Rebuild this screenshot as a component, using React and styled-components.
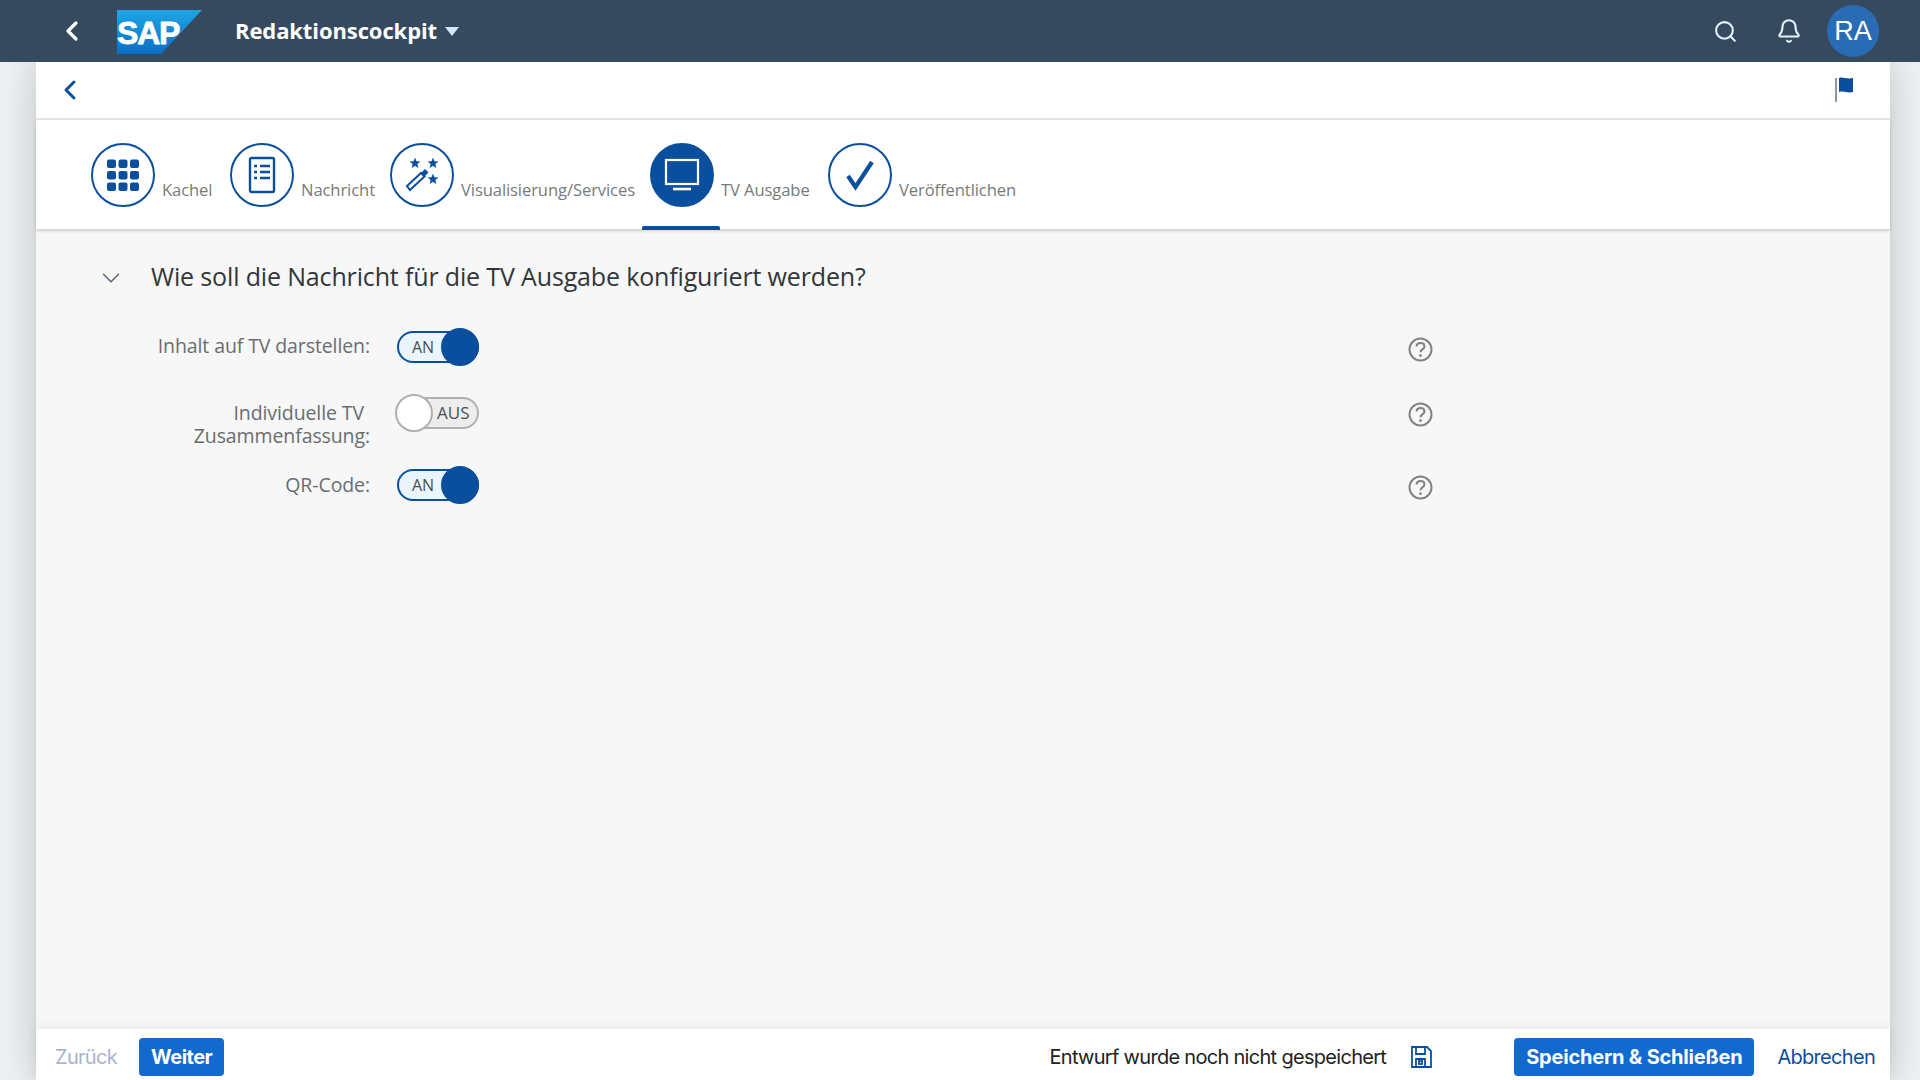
import React from 'react';
import styled, { createGlobalStyle } from 'styled-components';
import { Search, Bell, ChevronLeft, ChevronDown } from 'lucide-react';

const Global = createGlobalStyle`
  html, body { margin: 0; padding: 0; height: 100%; }
  body {
    background: #eef1f2;
    font-family: "Open Sans", "Liberation Sans", sans-serif;
    overflow: hidden;
  }
`;

const Page = styled.div`
  display: flex;
  flex-direction: column;
  height: 1080px;
`;

const Shell = styled.header`
  display: flex;
  align-items: center;
  height: 62px;
  flex: none;
  background: #354a5f;
  color: #fff;
  position: relative;
  z-index: 2;
`;

const ShellBack = styled.button`
  display: flex;
  border: 0;
  padding: 0;
  background: none;
  color: #fff;
  margin-left: 56px;
`;

const Logo = styled.svg`
  width: 86px;
  height: 44px;
  margin-left: 29px;
  margin-top: 1px;
  flex: none;
`;

const AppTitle = styled.div`
  margin-left: 32px;
  margin-top: -3px;
  font-family: "Open Sans", sans-serif;
  font-weight: 700;
  font-size: 22px;
  letter-spacing: -0.1px;
`;

const Caret = styled.span`
  margin-left: 8px;
  border-left: 7.5px solid transparent;
  border-right: 7.5px solid transparent;
  border-top: 9px solid #d1e8ff;
`;

const ShellRight = styled.div`
  margin-left: auto;
  display: flex;
  align-items: center;
  padding-right: 41px;
`;

const ShellIcon = styled.span`
  display: flex;
  margin-right: ${p => p.$gap}px;
  color: #e4f0fa;
`;

const Avatar = styled.div`
  width: 52px;
  height: 52px;
  border-radius: 50%;
  background: #2a6bb5;
  display: flex;
  align-items: center;
  justify-content: center;
  font-family: "Liberation Sans", sans-serif;
  font-size: 27px;
`;

const Sheet = styled.div`
  flex: 1;
  min-height: 0;
  display: flex;
  flex-direction: column;
  margin: 0 30px 0 36px;
  background: #f7f7f7;
  box-shadow: 0 0 36px rgba(0, 0, 0, 0.2);
`;

const SubBar = styled.div`
  display: flex;
  align-items: center;
  justify-content: space-between;
  height: 58px;
  flex: none;
  box-sizing: border-box;
  padding: 0 35px 0 18px;
  background: #fff;
  border-bottom: 2px solid #e4e4e4;
  color: #0a4f9e;
`;

const Tabs = styled.nav`
  display: flex;
  height: 109px;
  flex: none;
  box-sizing: border-box;
  padding: 23px 0 0 55px;
  background: #fff;
  box-shadow: 0 2px 3px rgba(0, 0, 0, 0.16);
  position: relative;
`;

const Tab = styled.div`
  display: flex;
  gap: 7px;
  position: relative;
  height: 64px;
  width: ${p => p.$width}px;
  flex: none;
`;

const Circle = styled.div`
  width: 64px;
  height: 64px;
  flex: none;
  box-sizing: border-box;
  border-radius: 50%;
  border: 2px solid #0a4f9e;
  background: ${p => (p.$active ? '#0a4f9e' : '#fff')};
  display: flex;
  align-items: center;
  justify-content: center;
  color: #0a4f9e;
`;

const TabLabel = styled.span`
  font-family: "Open Sans", sans-serif;
  font-size: 16.6px;
  line-height: 20px;
  letter-spacing: -0.1px;
  color: #7a7a7a;
  margin-top: 37px;
  white-space: nowrap;
`;

const Underline = styled.span`
  position: absolute;
  left: -8px;
  top: 83px;
  width: 78px;
  height: 4px;
  border-radius: 2px 2px 0 0;
  background: #0a4f9e;
`;

const Main = styled.main`
  flex: 1;
  min-height: 0;
  padding: 29px 0 0 60px;
`;

const SectionHead = styled.div`
  display: flex;
  align-items: center;
  gap: 25px;
  color: #5a6b7a;
`;

const SectionToggle = styled.span`
  display: flex;
  margin-top: 4px;
`;

const SectionTitle = styled.h2`
  margin: 0;
  font-family: "Open Sans", sans-serif;
  font-weight: 400;
  font-size: 25px;
  line-height: 36px;
  letter-spacing: -0.15px;
  color: #32363a;
`;

const Form = styled.div`
  display: grid;
  grid-template-columns: 274px 84px 1fr;
  grid-template-rows: 66px 72px 40px;
  column-gap: 27px;
  margin-top: 21px;
`;

const Label = styled.div`
  text-align: right;
  font-family: "Open Sans", sans-serif;
  font-size: 19.5px;
  line-height: 23px;
  color: #6a6d70;
  padding-top: ${p => p.$top}px;
  box-sizing: border-box;
  letter-spacing: -0.1px;
`;

const Indent = styled.span`
  padding-right: 6px;
`;

const ToggleCell = styled.div`
  padding-top: 16px;
`;

const Toggle = styled.div`
  position: relative;
  width: 82px;
  height: 32px;
  box-sizing: border-box;
  border-radius: 16px;
  border: 2px solid ${p => (p.$on ? '#0a4f9e' : '#aeb0b2')};
  background: ${p => (p.$on ? '#ebf5fe' : '#ededed')};
  font-family: "Open Sans", sans-serif;
  font-size: ${p => (p.$on ? 16 : 17)}px;
  line-height: 28px;
  color: #4d4f52;
  padding-left: ${p => (p.$on ? 13 : 38)}px;
`;

const Knob = styled.span`
  position: absolute;
  top: -5px;
  ${p => (p.$on ? 'right: -2px;' : 'left: -4px;')}
  width: 38px;
  height: 38px;
  box-sizing: border-box;
  border-radius: 50%;
  background: ${p => (p.$on ? '#0a4f9e' : '#fff')};
  border: 2px solid ${p => (p.$on ? '#0a4f9e' : '#aeb0b2')};
`;

const HelpCell = styled.div`
  padding-left: 900px;
  padding-top: ${p => p.$top}px;
  color: #818487;
`;

const Footer = styled.footer`
  display: flex;
  align-items: center;
  box-sizing: border-box;
  height: 51px;
  flex: none;
  background: #fff;
  box-shadow: 0 -2px 10px rgba(0, 0, 0, 0.06);
  padding: 5px 15px 0 19px;
  font-family: Inter, "Liberation Sans", sans-serif;
  font-size: 20px;
`;

const Ghost = styled.span`
  color: ${p => p.$color};
  margin-right: ${p => p.$gap}px;
  letter-spacing: -0.7px;
`;

const Primary = styled.button`
  height: 38px;
  box-sizing: border-box;
  border: 0;
  border-radius: 4px;
  padding: 0 12px;
  background: #1269ce;
  color: #fff;
  font-family: Inter, "Liberation Sans", sans-serif;
  font-weight: 700;
  font-size: 20px;
  letter-spacing: ${p => p.$spacing}px;
  margin-right: ${p => p.$gap}px;
`;

const Draft = styled.span`
  margin-left: auto;
  color: #222;
  letter-spacing: -0.7px;
`;

const SaveIcon = styled.svg`
  margin: 0 82px 0 24px;
`;

const GridIcon = () => (
  <svg width="34" height="34" viewBox="0 0 34 34" fill="#0a4f9e">
    {[0, 11.5, 23].map(y => [0, 11.5, 23].map(x => (
      <rect key={`${x}-${y}`} x={x + 1} y={y + 1.5} width="9" height="8.5" rx="2" />
    )))}
  </svg>
);

const DocIcon = () => (
  <svg width="28" height="38" viewBox="0 0 28 38" fill="none" stroke="#0a4f9e" strokeWidth="2.4">
    <rect x="2" y="2" width="24" height="34" rx="1.5" />
    <path d="M6 10h3M12 10h10M6 16h3M12 16h10M6 22h3M12 22h10" />
  </svg>
);

const Star = ({ x, y }) => (
  <path
    transform={`translate(${x} ${y}) scale(1.25)`}
    fill="#0a4f9e"
    d="M0-4.5 1.2-1.4 4.4-1.2 1.9.8 2.7 4 0 2.2-2.7 4-1.9.8-4.4-1.2-1.2-1.4Z"
  />
);

const WandIcon = () => (
  <svg width="36" height="36" viewBox="0 0 36 36" fill="none">
    <Star x={11} y={6} />
    <Star x={29} y={6} />
    <Star x={29} y={22} />
    <path d="M3 29 17 16l3.500 3.500L6 33Z" stroke="#0a4f9e" strokeWidth="2" />
    <path d="M17 16l4-4 3.500 3.500-4 4Z" fill="#0a4f9e" />
  </svg>
);

const TvIcon = () => (
  <svg width="36" height="34" viewBox="0 0 36 34" fill="none" stroke="#fff" strokeWidth="2.2">
    <rect x="2" y="2" width="32" height="24" />
    <path d="M9 31h18" strokeWidth="2.6" />
  </svg>
);

const CheckIcon = () => (
  <svg width="32" height="32" viewBox="0 0 32 32" fill="none" stroke="#0a4f9e" strokeWidth="4.2">
    <path d="M4 17l7.500 11L28 3" />
  </svg>
);

const HelpIcon = () => (
  <svg width="25" height="25" viewBox="0 0 25 25" fill="none" stroke="currentColor" strokeWidth="2">
    <circle cx="12.5" cy="12.5" r="11" />
    <path d="M8.6 9.6c0-2.2 1.7-3.6 3.9-3.6s3.9 1.3 3.9 3.4c0 3-3.9 3-3.9 5.8" strokeWidth="2.1" />
    <circle cx="12.5" cy="18.6" r="1.4" fill="currentColor" stroke="none" />
  </svg>
);

const tabs = [
  { label: 'Kachel', width: 139, icon: <GridIcon /> },
  { label: 'Nachricht', width: 160, icon: <DocIcon /> },
  { label: 'Visualisierung/Services', width: 260, icon: <WandIcon /> },
  { label: 'TV Ausgabe', width: 178, icon: <TvIcon />, active: true },
  { label: 'Veröffentlichen', width: 200, icon: <CheckIcon /> },
];

export default function App() {
  return (
    <Page>
      <Global />
      <Shell>
        <ShellBack><ChevronLeft size={32} strokeWidth={2.4} /></ShellBack>
        <Logo viewBox="0 0 86 44">
          <defs>
            <linearGradient id="sapBlue" x1="0" y1="0" x2="0" y2="1">
              <stop offset="0" stopColor="#1ea5e6" />
              <stop offset="1" stopColor="#0a6fc4" />
            </linearGradient>
          </defs>
          <polygon points="0,0 85,0 44,44 0,44" fill="url(#sapBlue)" />
          <text x="0" y="34" fontFamily="Liberation Sans, sans-serif" fontWeight="700" fontSize="32" letterSpacing="-1.2" fill="#fff" stroke="#fff" strokeWidth="0.8">SAP</text>
        </Logo>
        <AppTitle>Redaktionscockpit</AppTitle>
        <Caret />
        <ShellRight>
          <ShellIcon $gap={38}><Search size={25} strokeWidth={2} /></ShellIcon>
          <ShellIcon $gap={25}><Bell size={26} strokeWidth={1.9} /></ShellIcon>
          <Avatar>RA</Avatar>
        </ShellRight>
      </Shell>
      <Sheet>
        <SubBar>
          <ChevronLeft size={32} strokeWidth={2.2} />
          <svg width="20" height="26" viewBox="0 0 20 26">
            <rect x="0" y="1" width="2" height="24" fill="#8c97a6" />
            <path d="M4 1c4-1.500 7 1.500 14 0v14c-6 1.500-9-1.500-14 0Z" fill="#0a4f9e" />
          </svg>
        </SubBar>
        <Tabs>
          {tabs.map(t => (
            <Tab key={t.label} $width={t.width}>
              <Circle $active={t.active}>{t.icon}</Circle>
              <TabLabel>{t.label}</TabLabel>
              {t.active && <Underline />}
            </Tab>
          ))}
        </Tabs>
        <Main>
          <SectionHead>
            <SectionToggle><ChevronDown size={30} strokeWidth={1.3} /></SectionToggle>
            <SectionTitle>Wie soll die Nachricht für die TV Ausgabe konfiguriert werden?</SectionTitle>
          </SectionHead>
          <Form>
            <Label $top={19}>Inhalt auf TV darstellen:</Label>
            <ToggleCell><Toggle $on>AN<Knob $on /></Toggle></ToggleCell>
            <HelpCell $top={22}><HelpIcon /></HelpCell>

            <Label $top={20}><Indent>Individuelle TV</Indent><br />Zusammenfassung:</Label>
            <ToggleCell><Toggle>AUS<Knob /></Toggle></ToggleCell>
            <HelpCell $top={21}><HelpIcon /></HelpCell>

            <Label $top={20}>QR-Code:</Label>
            <ToggleCell><Toggle $on>AN<Knob $on /></Toggle></ToggleCell>
            <HelpCell $top={22}><HelpIcon /></HelpCell>
          </Form>
        </Main>
        <Footer>
          <Ghost $color="#a9b4cc" $gap={22}>Zurück</Ghost>
          <Primary $spacing={-0.5}>Weiter</Primary>
          <Draft>Entwurf wurde noch nicht gespeichert</Draft>
          <SaveIcon width="22" height="22" viewBox="0 0 22 22" fill="none" stroke="#0a4f9e" strokeWidth="1.8">
            <path d="M2 1h15l4 4v16H2Z" />
            <path d="M6 1v7h9V1M6 21v-8h9v8" />
            <rect x="9" y="15" width="3" height="3" />
          </SaveIcon>
          <Primary $gap={23} $spacing={-0.2}>Speichern &amp; Schließen</Primary>
          <Ghost $color="#0a4f9e" $gap={0}>Abbrechen</Ghost>
        </Footer>
      </Sheet>
    </Page>
  );
}
